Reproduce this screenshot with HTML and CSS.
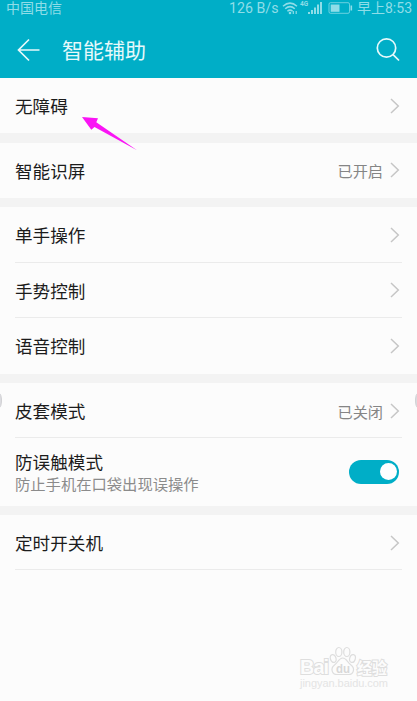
FILE: index.html
```html
<!DOCTYPE html>
<html lang="zh-CN">

<head>
    <meta charset="UTF-8">
    <meta name="viewport" content="width=device-width, initial-scale=1.0">
    <title>智能辅助</title>
    <link rel="stylesheet" href="styles.css">
</head>

<body>
    <header class="app-header">
        <div class="status-bar">
            <span class="carrier">中国电信</span>
            <div class="status-right">
                <span class="speed">126 B/s</span>
                <svg class="wifi" width="17" height="15" viewBox="0 0 17 15">
                    <g fill="none" stroke="currentColor" stroke-width="1.5">
                        <path d="M1 5.2Q8 -1 15 5.2" />
                        <path d="M3.2 7.8Q8 3.4 12.8 7.8" />
                        <path d="M5.4 10.2Q8 8 10.6 10.2" />
                    </g>
                    <circle cx="8" cy="12" r="1.3" fill="currentColor" />
                    <path d="M11.3 10v3M14.2 10v3" stroke="currentColor" stroke-width="1.2" />
                </svg>
                <span class="network">4G</span>
                <svg class="signal" width="15" height="14" viewBox="0 0 15 14" fill="currentColor">
                    <path d="M0 11h2v2H0zM3 9h2v4H3zM6 6.5h2V13H6zM9 3.5h2V13H9zM12 1h2v12h-2z" />
                </svg>
                <svg class="battery" width="25" height="14" viewBox="0 0 25 14">
                    <rect x="1" y="1.7" width="20.5" height="10.6" rx="1.5" fill="none" stroke="currentColor" opacity=".75" />
                    <path d="M2.7 3.5h8.8v7.3H2.7z" fill="currentColor" />
                    <path d="M23.3 4.5v5" stroke="currentColor" stroke-width="1.6" />
                </svg>
                <span class="time">早上8:53</span>
            </div>
        </div>
        <div class="title-bar">
            <svg class="back" width="24" height="24" viewBox="0 0 24 24">
                <path d="M22.5 12H2M12 1.5L1.5 12L12 22.5" />
            </svg>
            <h1>智能辅助</h1>
            <svg class="search" width="26" height="26" viewBox="0 0 26 26">
                <circle cx="11.5" cy="11" r="9.2" />
                <path d="M17.8 17.3L24 23.5" />
            </svg>
        </div>
    </header>

    <main class="settings">
        <section class="group">
            <div class="row">
                <span class="label">无障碍</span>
                <svg class="chevron" viewBox="0 0 10 16"><path d="M1 1L8.3 8L1 15" /></svg>
            </div>
        </section>

        <section class="group">
            <div class="row">
                <span class="label">智能识屏</span>
                <span class="value">已开启</span>
                <svg class="chevron" viewBox="0 0 10 16"><path d="M1 1L8.3 8L1 15" /></svg>
            </div>
        </section>

        <section class="group">
            <div class="row">
                <span class="label">单手操作</span>
                <svg class="chevron" viewBox="0 0 10 16"><path d="M1 1L8.3 8L1 15" /></svg>
            </div>
            <div class="row">
                <span class="label">手势控制</span>
                <svg class="chevron" viewBox="0 0 10 16"><path d="M1 1L8.3 8L1 15" /></svg>
            </div>
            <div class="row">
                <span class="label">语音控制</span>
                <svg class="chevron" viewBox="0 0 10 16"><path d="M1 1L8.3 8L1 15" /></svg>
            </div>
        </section>

        <section class="group">
            <div class="row">
                <span class="label">皮套模式</span>
                <span class="value">已关闭</span>
                <svg class="chevron" viewBox="0 0 10 16"><path d="M1 1L8.3 8L1 15" /></svg>
            </div>
            <div class="row row-tall">
                <div class="label">
                    <div>防误触模式</div>
                    <div class="hint">防止手机在口袋出现误操作</div>
                </div>
                <span class="toggle"><span class="knob"></span></span>
            </div>
        </section>

        <section class="group group-last">
            <div class="row">
                <span class="label">定时开关机</span>
                <svg class="chevron" viewBox="0 0 10 16"><path d="M1 1L8.3 8L1 15" /></svg>
            </div>
        </section>
    </main>

    <!-- pointer to the first entry -->
    <svg class="pointer" width="56" height="36" viewBox="0 0 56 36">
        <path d="M0 0L16 1.3L14.3 5.2L55 33.3L12.5 10L9.3 12.8Z" />
    </svg>

    <span class="edge edge-left"></span>
    <span class="edge edge-right"></span>

    <svg class="watermark" width="96" height="46" viewBox="0 0 96 46">
        <g class="brand">
            <text x="1" y="28" font-size="20" textLength="29">Bai</text>
            <g transform="translate(30 0)">
                <ellipse cx="9.8" cy="6" rx="3.1" ry="4.5" />
                <ellipse cx="17.8" cy="6" rx="3.1" ry="4.5" />
                <ellipse cx="4.2" cy="12.5" rx="2.8" ry="4" transform="rotate(-15 4.2 12.5)" />
                <ellipse cx="23.5" cy="12.5" rx="2.8" ry="4" transform="rotate(15 23.5 12.5)" />
                <path d="M13.7 12C10 12 9 16.5 5.5 19C1 22.5 3 28.5 8 28.5H19.5C24.5 28.5 26.5 22.5 22 19C18.5 16.5 17.5 12 13.7 12Z" />
            </g>
            <text class="du" x="37" y="26.5" font-size="13" textLength="14" lengthAdjust="spacingAndGlyphs">du</text>
            <text x="58" y="27.5" font-size="15.5" textLength="30" lengthAdjust="spacingAndGlyphs">经验</text>
        </g>
        <text class="site" x="1" y="41" font-size="11" textLength="88">jingyan.baidu.com</text>
    </svg>
</body>

</html>
```
FILE: styles.css
```css
:root {
    --primary-color: #00aec7;
    --status-color: #8fdde8;
    --row-background: #fcfcfc;
    --gap-color: #f3f3f3;
    --line-color: #ebebeb;
    --text-color: #1c1c1c;
    --subtle-text-color: #858585;
}

* {
    box-sizing: border-box;
    margin: 0;
    padding: 0;
}

body {
    position: relative;
    width: 417px;
    height: 701px;
    overflow: hidden;
    background-color: var(--row-background);
    color: var(--text-color);
    font-family: Roboto, 'Noto Sans CJK SC', sans-serif;
}

svg {
    display: block;
    flex: none;
}

/* Header */
.app-header {
    height: 78px;
    background-color: var(--primary-color);
}

.status-bar {
    display: flex;
    justify-content: space-between;
    height: 16px;
    padding: 0 5px 0 6px;
    color: var(--status-color);
    font-size: 14px;
    line-height: 16px;
    white-space: nowrap;
}

.status-right {
    display: flex;
    align-items: center;
}

.speed {
    width: 53px;
    font-size: 14.2px;
}

.network {
    align-self: flex-start;
    width: 8px;
    font-size: 6.5px;
    font-weight: 700;
    line-height: 8px;
}

.wifi {
    margin-right: 1px;
}

.signal {
    margin-right: 5px;
}

.battery {
    margin-right: 4px;
}

.title-bar {
    display: flex;
    align-items: center;
    height: 62px;
    padding: 6px 16px 0 17px;
    color: #e6f9fb;
}

.title-bar svg {
    fill: none;
    stroke: currentColor;
    stroke-width: 1.7;
}

.title-bar h1 {
    flex: 1;
    margin-left: 21px;
    padding-top: 2px;
    font-size: 21px;
    font-weight: 400;
    line-height: 30px;
}

/* Settings list */
.settings {
    display: flex;
    flex-direction: column;
    gap: 9.3px;
    background-color: var(--gap-color);
}

.group {
    background-color: var(--row-background);
}

.row {
    display: flex;
    align-items: center;
    height: 55.4px;
    margin-left: 15px;
    padding-right: 17px;
    position: relative;
}

.row:not(:last-child)::after,
.group-last .row::after {
    content: "";
    position: absolute;
    left: 0;
    right: 15px;
    bottom: 0;
    height: 1px;
    background-color: var(--line-color);
}

.label {
    flex: 1;
    padding-top: 2.4px;
    font-size: 17.6px;
    line-height: 24px;
}

.value {
    margin-right: 7px;
    color: var(--subtle-text-color);
    font-size: 15.2px;
}

.chevron {
    width: 10px;
    height: 16px;
    fill: none;
    stroke: #c6c6c6;
    stroke-width: 1.5;
}

.row-tall {
    height: 67.4px;
}

.hint {
    color: #8b8b8b;
    font-size: 15.3px;
    line-height: 21px;
}

.toggle {
    display: flex;
    justify-content: flex-end;
    align-items: center;
    width: 50px;
    height: 24px;
    margin-right: 1px;
    padding-right: 2px;
    border-radius: 12px;
    background-color: var(--primary-color);
}

.knob {
    width: 17px;
    height: 17px;
    border-radius: 50%;
    background-color: #fff;
}

/* Overlays */
.pointer {
    position: absolute;
    left: 82px;
    top: 117px;
    fill: #fa14f5;
}

.edge {
    position: absolute;
    top: 389px;
    width: 20px;
    height: 23px;
    border: 1.5px solid #d2d2d5;
    border-radius: 10px;
    background-color: #dcdce0;
}

.edge-left {
    left: -18px;
}

.edge-right {
    right: -18px;
}

.watermark {
    position: absolute;
    left: 299px;
    top: 646px;
    font-family: 'Liberation Sans', 'Noto Sans CJK SC', sans-serif;
}

.brand {
    fill: #fcfcfc;
    stroke: #dedede;
    stroke-width: 1.2;
    font-weight: 700;
}

.brand text {
    stroke-width: 2;
    paint-order: stroke;
}

.brand .du {
    fill: #d8d8d8;
    stroke: none;
}

.site {
    fill: #e4e4e4;
}
```
